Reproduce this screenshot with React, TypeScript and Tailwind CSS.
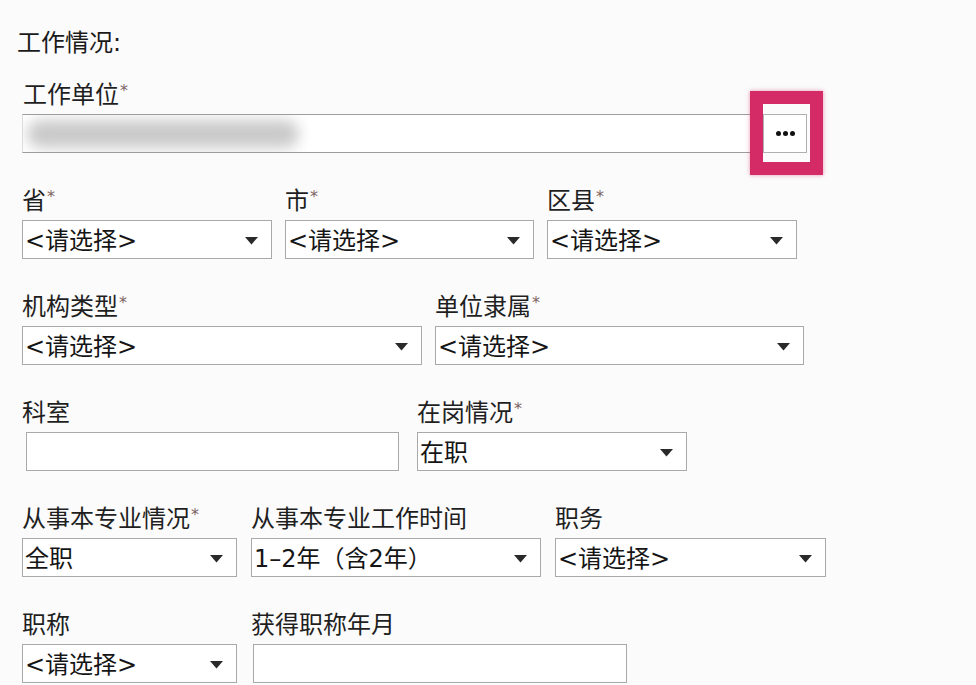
const font = { fontFamily: '"DejaVu Sans", "Noto Sans CJK SC", sans-serif' };

function Star() {
  return <span className="ml-[1px] align-top text-[16px] leading-[18px] text-[#7d6262]">*</span>;
}

function Label({ text, req, className = "" }: { text: string; req?: boolean; className?: string }) {
  return (
    <div className={`h-[26px] whitespace-nowrap text-[24px] leading-[26px] text-[#1f1f1f] ${className}`}>
      {text}
      {req && <Star />}
    </div>
  );
}

function Arrow() {
  return (
    <svg width="13" height="8" viewBox="0 0 13 8" className="shrink-0">
      <path d="M0 0 H13 L6.5 7.5 Z" fill="#2a2a2a" />
    </svg>
  );
}

function Select({ value, width }: { value: string; width: string }) {
  return (
    <div
      className={`flex h-[39px] ${width} items-center justify-between border border-[#a9a9a9] bg-white pl-[2px] pr-[13px] pt-[2px] text-[24px] text-[#151515]`}
    >
      <span className="whitespace-nowrap">{value}</span>
      <Arrow />
    </div>
  );
}

function TextBox({ width, className = "" }: { width: string; className?: string }) {
  return <div className={`h-[39px] ${width} border border-[#a9a9a9] bg-white ${className}`} />;
}

function Field({ label, req, children, className = "" }: { label: string; req?: boolean; children: React.ReactNode; className?: string }) {
  return (
    <div className={`flex flex-col gap-[6px] ${className}`}>
      <Label text={label} req={req} />
      {children}
    </div>
  );
}

export default function App() {
  return (
    <div className="min-h-screen bg-[#fbfbfb] pt-[30px]" style={font}>
      <div className="pl-[17px] text-[24px] leading-[26px] text-[#1a1a1a]">工作情况:</div>

      <div className="mt-[26px] flex flex-col gap-[35px] pl-[22px]">
        <div className="flex flex-col gap-[6px]">
          <Label text="工作单位" req className="pl-[1px]" />
          <div className="flex items-center">
            <div className="relative h-[39px] w-[741px] overflow-hidden border-y border-l border-y-[#9d9d9d] border-l-[#dcdcdc] bg-white">
              <div className="absolute left-[4px] top-[5px] h-[28px] w-[272px] rounded-full bg-[#cacaca] blur-[7px]" />
            </div>
            <div className="relative">
              <div className="flex h-[39px] w-[44px] items-center justify-center gap-[2px] border border-[#b0b0b0] bg-white">
                <span className="h-[5px] w-[5px] rounded-full bg-[#111]" />
                <span className="h-[5px] w-[5px] rounded-full bg-[#111]" />
                <span className="h-[5px] w-[5px] rounded-full bg-[#111]" />
              </div>
              <div className="pointer-events-none absolute -left-[13px] -right-[16px] -top-[23px] -bottom-[22px] border-[13px] border-[#d42a66] shadow-[0_0_4px_rgba(212,42,102,0.5)]" />
            </div>
          </div>
        </div>

        <div className="flex gap-[13px]">
          <Field label="省" req>
            <Select value="<请选择>" width="w-[250px]" />
          </Field>
          <Field label="市" req>
            <Select value="<请选择>" width="w-[249px]" />
          </Field>
          <Field label="区县" req>
            <Select value="<请选择>" width="w-[250px]" />
          </Field>
        </div>

        <div className="flex gap-[13px]">
          <Field label="机构类型" req>
            <Select value="<请选择>" width="w-[400px]" />
          </Field>
          <Field label="单位隶属" req>
            <Select value="<请选择>" width="w-[369px]" />
          </Field>
        </div>

        <div className="flex gap-[18px]">
          <Field label="科室">
            <TextBox width="w-[373px]" className="ml-[4px]" />
          </Field>
          <Field label="在岗情况" req>
            <Select value="在职" width="w-[270px]" />
          </Field>
        </div>

        <div className="flex gap-[14px]">
          <Field label="从事本专业情况" req>
            <Select value="全职" width="w-[215px]" />
          </Field>
          <Field label="从事本专业工作时间">
            <Select value="1–2年（含2年）" width="w-[290px]" />
          </Field>
          <Field label="职务">
            <Select value="<请选择>" width="w-[271px]" />
          </Field>
        </div>

        <div className="flex gap-[14px]">
          <Field label="职称">
            <Select value="<请选择>" width="w-[215px]" />
          </Field>
          <Field label="获得职称年月">
            <TextBox width="w-[374px]" className="ml-[2px]" />
          </Field>
        </div>
      </div>
    </div>
  );
}
